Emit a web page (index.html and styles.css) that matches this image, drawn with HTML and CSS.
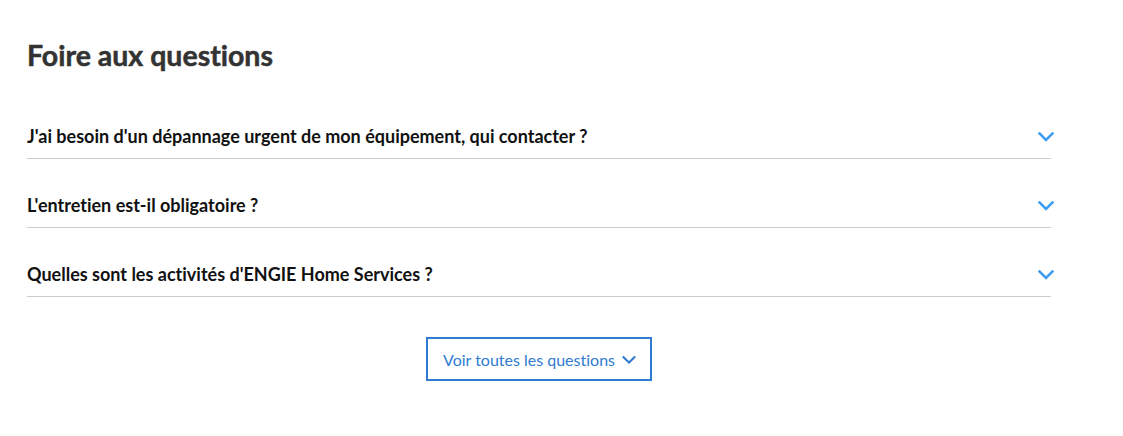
FILE: index.html
```html
<!DOCTYPE html>
<html lang="fr">
<head>
<meta charset="utf-8">
<link rel="stylesheet" href="styles.css">
</head>
<body>
<section class="faq">
  <h2 class="faq-title">Foire aux questions</h2>
  <ul class="faq-list">
    <li class="faq-item">
      <span class="faq-q">J'ai besoin d'un dépannage urgent de mon équipement, qui contacter ?</span>
      <svg class="chev" width="16" height="10" viewBox="0 0 16 10"><path d="M1.5 1.5 L8 8 L14.5 1.5" fill="none" stroke="currentColor" stroke-width="2.6" stroke-linecap="square"/></svg>
    </li>
    <li class="faq-item">
      <span class="faq-q">L'entretien est-il obligatoire ?</span>
      <svg class="chev" width="16" height="10" viewBox="0 0 16 10"><path d="M1.5 1.5 L8 8 L14.5 1.5" fill="none" stroke="currentColor" stroke-width="2.6" stroke-linecap="square"/></svg>
    </li>
    <li class="faq-item">
      <span class="faq-q">Quelles sont les activités d'ENGIE Home Services ?</span>
      <svg class="chev" width="16" height="10" viewBox="0 0 16 10"><path d="M1.5 1.5 L8 8 L14.5 1.5" fill="none" stroke="currentColor" stroke-width="2.6" stroke-linecap="square"/></svg>
    </li>
  </ul>
  <div class="faq-more">
    <button class="more-btn" type="button">Voir toutes les questions
      <svg class="btn-chev" width="16" height="10" viewBox="0 0 16 10"><path d="M1.8 1.8 L8 7.8 L14.2 1.8" fill="none" stroke="currentColor" stroke-width="2.4" stroke-linecap="square"/></svg>
    </button>
  </div>
</section>
</body>
</html>
```

FILE: styles.css
```css
html, body {
  margin: 0;
  padding: 0;
  background: #ffffff;
}
body {
  font-family: Lato, "Open Sans", sans-serif;
  font-variant-ligatures: none;
}
.faq {
  width: 1024px;
  padding: 38px 0 0 27px;
}
.faq-title {
  margin: 0 0 18px;
  font-size: 28.5px;
  line-height: 34px;
  font-weight: 700;
  color: #333333;
  -webkit-text-stroke: 0.5px #333333;
}
.faq-list {
  list-style: none;
  margin: 0;
  padding: 0;
}
.faq-item {
  display: flex;
  align-items: center;
  justify-content: space-between;
  padding: 36px 0 12px;
  border-bottom: 1px solid #cccccc;
  line-height: 20px;
}
.faq-q {
  font-size: 18px;
  font-weight: 700;
  color: #111111;
}
.chev {
  color: #3f9ef0;
  margin-right: -3px;
  margin-top: 1px;
}
.faq-more {
  display: flex;
  justify-content: center;
  padding-top: 40px;
}
.more-btn {
  display: flex;
  align-items: center;
  gap: 7px;
  width: 226px;
  height: 44px;
  box-sizing: border-box;
  padding: 0 14px 0 15px;
  background: #ffffff;
  border: 2px solid #2f7bd1;
  color: #2f7bd1;
  font-family: Lato, "Open Sans", sans-serif;
  font-variant-ligatures: none;
  font-size: 16px;
  white-space: nowrap;
  cursor: pointer;
}
.btn-chev {
  margin-top: 1px;
}
```
